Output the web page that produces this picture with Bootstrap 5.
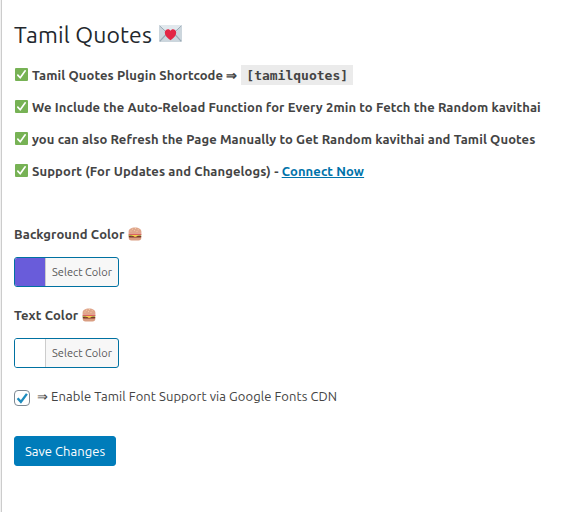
<!DOCTYPE html>
<html lang="en">
<head>
<meta charset="utf-8">
<meta name="viewport" content="width=device-width, initial-scale=1">
<title>Tamil Quotes</title>
<link href="https://cdn.jsdelivr.net/npm/bootstrap@5.3.0/dist/css/bootstrap.min.css" rel="stylesheet">
<style>
body{font-family:Ubuntu,"Noto Sans","Open Sans",sans-serif;font-size:13px;line-height:20px;color:#444;background:#f1f1f1;overflow:hidden}
.admin-page{height:512px;border-left:1px solid #ccc;margin-left:1px;padding:20px 0 0 12px;background:#fff}
.page-title{font-size:23px;line-height:30px;color:#23282d;font-weight:400;letter-spacing:.12px}
.page-title svg{margin:0 0 3px 7px}
.notes{height:174px;padding-top:15px}
.note{height:20px;margin-bottom:12px;font-weight:700;white-space:nowrap;letter-spacing:.1px}
.note svg{margin:0 4px 1px 1px;flex:none}
.shortcode{font:700 13px/21px "DejaVu Sans Mono",monospace;background:#ebebeb;color:#444;padding:0 5px;height:20px;margin-left:4px;letter-spacing:0}
.note a{color:#0073aa}
.field-label{height:20px;font-weight:700;letter-spacing:.1px}
.field-label svg{margin:0 0 1px 3.5px}
.color-btn{width:105px;height:30px;border:1px solid #0071a1;border-radius:3px;background:#f7f7f7;overflow:hidden;padding:0;font-size:11px;line-height:28px;color:#555;margin-top:13px}
.swatch{width:30px;height:28px;flex:none}
.color-name{flex:1;border-left:1px solid #ccc;text-align:center;white-space:nowrap;letter-spacing:.04px}
.bg-swatch{background:#695cda}
.text-swatch{background:#fff}
.text-label{margin-top:18px}
.check-row{margin-top:18px;height:20px}
.font-check{width:16px;height:16px;border:1px solid #7e8993;border-radius:4px;margin-top:3px}
.font-label{white-space:nowrap;margin-left:7px;letter-spacing:.07px}
.save-btn{width:102px;height:30px;margin-top:30px;background:#007cba;border:1px solid #007cba;border-radius:3px;color:#fff;font-size:13px;line-height:28px;padding:0;letter-spacing:.04px}
</style>
<script src="https://cdn.jsdelivr.net/npm/bootstrap@5.3.0/dist/js/bootstrap.bundle.min.js"></script>
</head>
<body>
<svg class="d-none" xmlns="http://www.w3.org/2000/svg">
  <symbol id="tick" viewBox="0 0 13 13"><rect width="13" height="13" rx="1" fill="#77b255"/><path d="M2.8 7.1 5.2 9.8 10.2 2.8" fill="none" stroke="#fff" stroke-width="1.65" stroke-linecap="round" stroke-linejoin="round"/></symbol>
  <symbol id="burger" viewBox="0 0 14 14"><path d="M.7 9.2h12.6v1.6Q13.3 13.4 10.5 13.4h-7Q.7 13.4.7 10.8Z" fill="#d99e82"/><rect x=".7" y="8.6" width="12.6" height="2" rx="1" fill="#7a3524"/><path d="M.5 7.4h13v.9l-2 .8-1.5-.4-2 1.2-2.2-1.1-2 .5-1.7-.5-1.6.3Z" fill="#a3ad45"/><path d="m3.2 8 3.8 1.9L10.8 8Z" fill="#ffcc4d"/><rect x=".5" y="6.5" width="13" height="1.2" rx=".6" fill="#dd3e4c"/><path d="M.6 6.6V4.7C.6 2 3 .4 7 .4s6.4 1.6 6.4 4.3v1.9q-6.4.6-12.8 0Z" fill="#dfa58c"/><path d="M4 2.2h1M7 1.5h1M9.7 2.7h1M2.5 4h1M6 3.6h1M8.5 4.4h1" stroke="#ffe8b6" stroke-width=".6"/></symbol>
</svg>
<main class="admin-page">
  <h1 class="page-title d-flex align-items-center mb-0"><span>Tamil Quotes</span>
    <svg width="23" height="17" viewBox="0 0 23 17"><rect width="23" height="17" rx="1.5" fill="#ccd6dd"/><path d="M.7 16.3 8.4 8M22.3 16.3 14.6 8" stroke="#99aab5" stroke-width="1.2"/><path d="M.4.8 10 9.7q1.5 1.3 3 0L22.6.8Q22 0 21.5 0h-20Q.8 0 .4.8Z" fill="#e1e8ed"/><path d="M.6.8 10 9.6q1.5 1.2 3 0L22.4.8" fill="none" stroke="#99aab5" stroke-width="1"/><path d="M11.5 15.2C8.3 13 5.8 10.6 5.8 7.7 5.8 5.5 7.3 4.2 9 4.2c1.1 0 2 .6 2.5 1.5.5-.9 1.4-1.5 2.5-1.5 1.7 0 3.2 1.3 3.2 3.5 0 2.9-2.5 5.3-5.7 7.5Z" fill="#e32644"/></svg>
  </h1>
  <section class="notes">
    <div class="note d-flex align-items-center"><svg width="13" height="13"><use href="#tick"/></svg><span>Tamil Quotes Plugin Shortcode ⇒</span><code class="shortcode">[tamilquotes]</code></div>
    <div class="note d-flex align-items-center"><svg width="13" height="13"><use href="#tick"/></svg><span>We Include the Auto-Reload Function for Every 2min to Fetch the Random kavithai</span></div>
    <div class="note d-flex align-items-center"><svg width="13" height="13"><use href="#tick"/></svg><span>you can also Refresh the Page Manually to Get Random kavithai and Tamil Quotes</span></div>
    <div class="note d-flex align-items-center"><svg width="13" height="13"><use href="#tick"/></svg><span>Support (For Updates and Changelogs) - <a href="#">Connect Now</a></span></div>
  </section>
  <form>
    <div class="field-label d-flex align-items-center"><span>Background Color</span><svg width="14" height="14"><use href="#burger"/></svg></div>
    <button type="button" class="color-btn d-flex"><span class="swatch bg-swatch"></span><span class="color-name">Select Color</span></button>
    <div class="field-label text-label d-flex align-items-center"><span>Text Color</span><svg width="14" height="14"><use href="#burger"/></svg></div>
    <button type="button" class="color-btn d-flex"><span class="swatch text-swatch"></span><span class="color-name">Select Color</span></button>
    <label class="check-row d-flex align-items-center"><span class="font-check d-flex"><svg width="14" height="14" viewBox="0 0 14 14"><path d="m2.6 7.2 3.3 3.7 6-8" fill="none" stroke="#1e8cbe" stroke-width="2.4"/></svg></span><span class="font-label">⇒ Enable Tamil Font Support via Google Fonts CDN</span></label>
    <button type="button" class="btn save-btn">Save Changes</button>
  </form>
</main>
</body>
</html>
